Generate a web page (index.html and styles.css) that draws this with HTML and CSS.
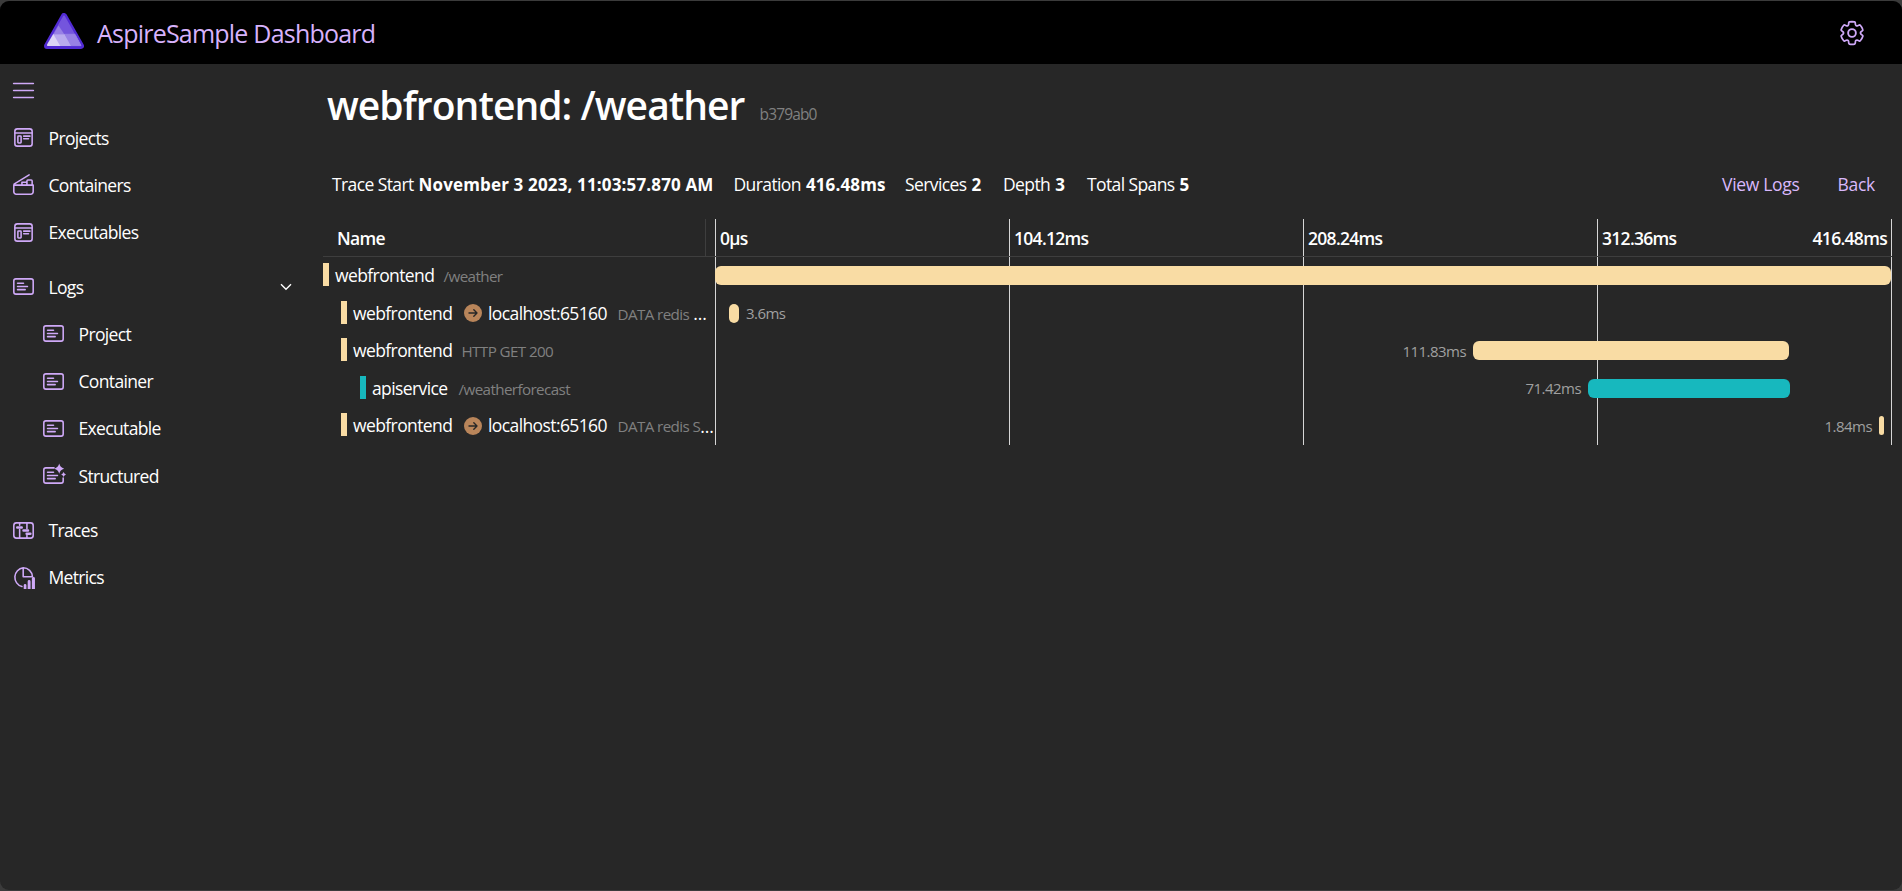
FILE: index.html
```html
<!DOCTYPE html>
<html lang="en">
<head>
<meta charset="utf-8">
<title>AspireSample Dashboard</title>
<link rel="stylesheet" href="styles.css">
</head>
<body>
<svg class="defs" width="0" height="0">
  <symbol id="app" viewBox="0 0 24 24"><rect x="3.7" y="3.7" width="16.6" height="16.6" rx="2.4"/><path d="M3.7 7.7h16.6M12.2 10.7h6M12.2 13.2h4.6"/><rect x="6.6" y="10.6" width="3.1" height="6.6" rx=".6"/></symbol>
  <symbol id="box" viewBox="0 0 24 24"><path d="M2.7 12.6h18.6v6.4a2.3 2.3 0 0 1-2.3 2.3H5a2.3 2.3 0 0 1-2.3-2.3zM2.9 11.6 17.4 2.8M10.5 12V9.8h3.9M15.3 12V8.6a.9.9 0 0 1 .9-.9h3.2a.9.9 0 0 1 .9.9V12"/></symbol>
  <symbol id="log" viewBox="0 0 24 24"><rect x="2.7" y="4.7" width="18.6" height="14.6" rx="2"/><path d="M6.3 8.8h5.7M6.3 12h9.5M6.3 15h7.3"/></symbol>
</svg>
<div class="window">
  <header class="topbar">
    <svg class="logo" viewBox="0 0 40 36">
      <path d="M20 3 37 33H3Z" fill="#512bd4" stroke="#512bd4" stroke-width="6" stroke-linejoin="round"/>
      <path d="M20 3.2 30.3 21.3H14.3L9.6 21.3Z" fill="#7455dd" stroke="#7455dd" stroke-width="1.5" stroke-linejoin="round"/>
      <path d="M14.5 12.5 20.5 21.5H9.3Z" fill="#9780e5"/>
      <path d="M20.5 21.3H31L37 32.6H26.5Z" fill="#9780e5" stroke="#9780e5" stroke-linejoin="round"/>
      <path d="M9 21.3H20.5L27 33.1H9Z" fill="#b9aaee"/>
      <path d="M9.2 21 16.3 33.1H4.2C3 33.1 2.7 32.2 3.2 31.3Z" fill="#dcd5f6"/>
    </svg>
    <span class="app-name">AspireSample Dashboard</span>
    <svg class="gear icon" viewBox="0 0 24 24"><path transform="translate(.84 .84) scale(.93)" d="M12.01 2.25c.74 0 1.47.1 2.18.25.32.07.55.33.59.65l.17 1.53a1.38 1.38 0 0 0 1.92 1.11l1.4-.61c.3-.13.64-.06.85.17a9.8 9.8 0 0 1 2.2 3.8c.1.3 0 .63-.26.82l-1.24.92a1.38 1.38 0 0 0 0 2.22l1.24.92c.26.19.36.52.27.82a9.8 9.8 0 0 1-2.2 3.8.75.75 0 0 1-.85.17l-1.4-.62a1.38 1.38 0 0 0-1.93 1.12l-.17 1.52a.75.75 0 0 1-.58.65 9.52 9.52 0 0 1-4.4 0 .75.75 0 0 1-.57-.65l-.17-1.52a1.38 1.38 0 0 0-1.93-1.11l-1.4.62a.75.75 0 0 1-.85-.18 9.8 9.8 0 0 1-2.2-3.8c-.1-.3 0-.63.27-.82l1.24-.92a1.38 1.38 0 0 0 0-2.22l-1.24-.92a.75.75 0 0 1-.28-.82 9.8 9.8 0 0 1 2.2-3.8c.23-.23.57-.3.86-.17l1.4.62c.4.17.86.15 1.25-.08.38-.22.63-.6.68-1.04l.17-1.53a.75.75 0 0 1 .58-.65c.72-.16 1.45-.24 2.2-.25Z"/><circle cx="12" cy="12" r="3.1"/></svg>
  </header>
  <div class="body">
    <nav class="nav">
      <svg class="icon menu" viewBox="0 0 24 24"><path d="M2.5 5.3h19M2.5 12h19M2.5 18.7h19"/></svg>
      <a class="item"><svg class="icon"><use href="#app"/></svg><span>Projects</span></a>
      <a class="item"><svg class="icon"><use href="#box"/></svg><span>Containers</span></a>
      <a class="item"><svg class="icon"><use href="#app"/></svg><span>Executables</span></a>
      <a class="item group"><svg class="icon"><use href="#log"/></svg><span>Logs</span><svg class="chevron" viewBox="0 0 12 8"><path d="M1 1.3 6 6.3 11 1.3"/></svg></a>
      <a class="item sub"><svg class="icon"><use href="#log"/></svg><span>Project</span></a>
      <a class="item sub"><svg class="icon"><use href="#log"/></svg><span>Container</span></a>
      <a class="item sub"><svg class="icon"><use href="#log"/></svg><span>Executable</span></a>
      <a class="item sub"><svg class="icon" viewBox="0 0 24 24"><path d="M12.5 4.7H4.7a2 2 0 0 0-2 2v10.6a2 2 0 0 0 2 2h14.6a2 2 0 0 0 2-2V14.5M6.3 8.8h5.7M6.3 12h9.5M6.3 15h7.3"/><path class="solid" d="M17.5.5q.8 3.8 4.7 4.9-3.9 1-4.7 4.9-.9-3.9-4.7-4.9 3.8-1.1 4.7-4.9zM21.7 8.7q.5 1.9 2.3 2.4-1.8.5-2.3 2.4-.5-1.9-2.3-2.4 1.8-.5 2.3-2.4z"/></svg><span>Structured</span></a>
      <a class="item group"><svg class="icon" viewBox="0 0 24 24"><rect x="2.7" y="4.7" width="18.6" height="14.6" rx="2.5"/><path d="M8.3 5v2M8.3 11v8M15.3 5v5.3M15.3 16.8V19"/><path class="thick" d="M6 9h4.3M12 12h4.3M15 15h3.6"/></svg><span>Traces</span></a>
      <a class="item"><svg class="icon" viewBox="0 0 24 24"><path d="M10.5 20.7A9.2 9.2 0 0 1 11.7 2.7A9 9 0 0 1 20.6 11.2H11.7V2.7"/><path class="solid" d="M12.2 19.500q0-1.200 1.300-1.200t1.300 1.200V23H12.200zM16 15.800q0-1.300 1.400-1.300t1.400 1.300V23H16zM20 13q0-1.400 1.500-1.400T23 13V23H20z"/></svg><span>Metrics</span></a>
    </nav>
    <main class="main">
      <div class="heading"><h1>webfrontend: /weather</h1><span class="trace-id">b379ab0</span></div>
      <div class="summary">
        <div class="stat s1">Trace Start <strong>November 3 2023, 11:03:57.870 AM</strong></div>
        <div class="stat s2">Duration <strong>416.48ms</strong></div>
        <div class="stat s3">Services <strong>2</strong></div>
        <div class="stat s4">Depth <strong>3</strong></div>
        <div class="stat s5">Total Spans <strong>5</strong></div>
        <a class="link logs-link">View Logs</a>
        <a class="link back-link">Back</a>
      </div>
      <div class="grid">
        <div class="row head">
          <div class="name">Name</div>
          <div class="time"><span>0µs</span><span>104.12ms</span><span>208.24ms</span><span class="last"><b>312.36ms</b><b>416.48ms</b></span></div>
        </div>
        <div class="row">
          <div class="name"><i class="mark"></i><span class="svc">webfrontend</span><span class="op">/weather</span></div>
          <div class="time"><i></i><i></i><i></i><i class="last"></i><div class="span"><div class="bar" style="width:1176px"></div></div></div>
        </div>
        <div class="row">
          <div class="name d1"><i class="mark"></i><span class="svc">webfrontend</span><svg class="arrow" viewBox="0 0 18 18"><circle cx="9" cy="9" r="9"/><path d="M5 9h8M9.8 5.8 13 9l-3.2 3.2"/></svg><span class="host">localhost:65160</span><span class="op">DATA redis</span><span class="dots gap">...</span></div>
          <div class="time"><i></i><i></i><i></i><i class="last"></i><div class="span" style="padding-left:14px"><div class="bar" style="width:10px"></div><span class="dur">3.6ms</span></div></div>
        </div>
        <div class="row">
          <div class="name d1"><i class="mark"></i><span class="svc">webfrontend</span><span class="op">HTTP GET 200</span></div>
          <div class="time"><i></i><i></i><i></i><i class="last"></i><div class="span rev" style="padding-right:103px"><div class="bar" style="width:316px"></div><span class="dur">111.83ms</span></div></div>
        </div>
        <div class="row">
          <div class="name d2"><i class="mark teal"></i><span class="svc api">apiservice</span><span class="op">/weatherforecast</span></div>
          <div class="time"><i></i><i></i><i></i><i class="last"></i><div class="span rev" style="padding-right:102px"><div class="bar teal" style="width:202px"></div><span class="dur">71.42ms</span></div></div>
        </div>
        <div class="row">
          <div class="name d1"><i class="mark"></i><span class="svc">webfrontend</span><svg class="arrow" viewBox="0 0 18 18"><circle cx="9" cy="9" r="9"/><path d="M5 9h8M9.8 5.8 13 9l-3.2 3.2"/></svg><span class="host">localhost:65160</span><span class="op">DATA redis S</span><span class="dots">...</span></div>
          <div class="time"><i></i><i></i><i></i><i class="last"></i><div class="span rev" style="padding-right:8px"><div class="bar" style="width:5px"></div><span class="dur">1.84ms</span></div></div>
        </div>
      </div>
    </main>
  </div>
</div>
</body>
</html>
```

FILE: styles.css
```css
* { box-sizing: border-box; }
body { margin: 0; background: #3b3b3b; color: #fff; font: 17.5px/24px "Open Sans", "Noto Sans", sans-serif; letter-spacing: -.6px; }
.defs { display: block; height: 0; }
.window { height: 889px; margin-top: 1px; border-radius: 9px; overflow: hidden; background: #272727; }
.icon { width: 25px; height: 25px; fill: none; stroke: #cfa9f8; stroke-width: 1.5; stroke-linecap: round; stroke-linejoin: round; flex: none; }
.solid { fill: #cfa9f8; stroke: none; }
.thick { stroke-width: 2.4; }

.topbar { height: 63px; background: #000; display: flex; align-items: center; padding: 0 35px 0 44px; }
.logo { width: 40px; height: 36px; margin-top: -3px; }
.app-name { margin: 0 0 0 13px; font-size: 25px; line-height: 32px; letter-spacing: -.78px; color: #d7b2fb; }
.gear { width: 30px; height: 30px; margin-left: auto; }

.body { display: flex; height: 827px; }
.nav { width: 323px; padding: 14px 0 0 11px; flex: none; letter-spacing: -.65px; }
.menu { display: block; }
.item { display: flex; align-items: center; height: 47.3px; width: 281px; }
.menu + .item { margin-top: 11px; }
.item span { margin-left: 12.5px; }
.item.group { margin-top: 7px; }
.item.sub { padding-left: 30px; }
.chevron { width: 12px; height: 8px; margin-left: auto; fill: none; stroke: #fff; stroke-width: 1.4; }

.main { width: 1569px; }
.heading { display: flex; align-items: baseline; height: 104px; padding: 15px 0 0 4px; }
h1 { margin: 0; font-size: 39px; line-height: 52px; font-weight: 600; letter-spacing: -.95px; white-space: nowrap; }
.trace-id { margin-left: 15px; font-size: 15.5px; color: #808080; letter-spacing: -.85px; }
.summary { display: flex; height: 51px; padding: 4px 0 0 9px; white-space: nowrap; }
.stat strong { margin-left: 1px; font-weight: 700; font-size: 17px; letter-spacing: .15px; }
.s1 { width: 401.5px; }
.s2 { width: 171.5px; }
.s3 { width: 98px; }
.s4 { width: 84px; }
.link { color: #d9b8fc; letter-spacing: -.3px; }
.logs-link { margin-left: auto; }
.back-link { margin: 0 17px 0 38px; }

.row { display: flex; height: 37.5px; }
.name { width: 392px; display: flex; align-items: center; white-space: nowrap; flex: none; }
.time { width: 1177px; display: grid; grid-template-columns: repeat(3, 294px) 295px; position: relative; }
.time > i, .time > span { border-left: 1px solid #d6d6d6; }
.time > .last { border-right: 1px solid #d6d6d6; }
.head { height: 38px; border-bottom: 1px solid #3e3e3e; font-weight: 600; letter-spacing: -.7px; }
.head .name { width: 383px; margin-right: 9px; padding: 0 0 0 14px; border-right: 1px solid #3e3e3e; }
.head .time > span { padding: 7px 4px 0; }
.head .last { display: flex; justify-content: space-between; }
.head b { font-weight: 600; }

.mark { width: 6px; height: 23px; margin-right: 6px; background: #f9dca4; flex: none; position: relative; top: -1px; }
.teal { background: #17b8be; }
.d1 { padding-left: 18px; }
.d2 { padding-left: 37px; }
.svc, .host { position: relative; top: -.5px; }
.svc { width: 99px; flex: none; }
.api { width: 77px; }
.op { margin-left: 9.5px; padding-top: 1px; font-size: 15.2px; color: #808080; }
.arrow { width: 18px; height: 18px; margin: 0 6px 0 12px; flex: none; fill: #b9855a; }
.arrow path { fill: none; stroke: #272727; stroke-width: 1.4; stroke-linecap: round; stroke-linejoin: round; }
.host { width: 120px; flex: none; }
.dots { letter-spacing: -.1px; }
.gap { margin-left: 4px; }
.span { position: absolute; inset: 0; display: flex; align-items: center; }
.rev { flex-direction: row-reverse; justify-content: flex-start; }
.bar { height: 19px; border-radius: 6px; background: #f9dca4; flex: none; }
.bar.teal { background: #17b8be; }
.dur { margin: 0 7px; font-size: 15px; color: #a0a0a0; letter-spacing: -.55px; }
```
